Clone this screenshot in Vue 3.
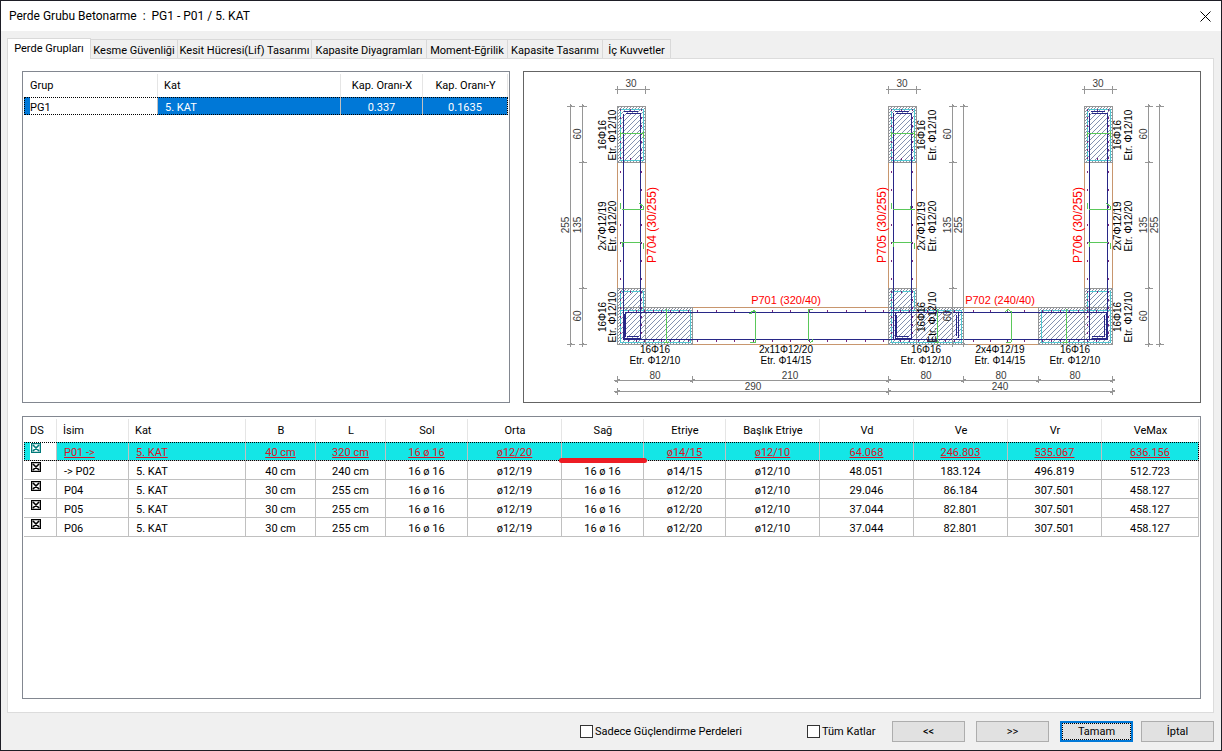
<template>
  <div class="window">
    <header class="titlebar">
      <h1 class="title">Perde Grubu Betonarme&nbsp; :&nbsp; PG1 - P01 / 5. KAT</h1>
      <button class="btn-close" aria-label="Kapat">
        <svg width="11" height="11" viewBox="0 0 11 11">
          <path d="M0.5 0.5L10.5 10.5M10.5 0.5L0.5 10.5" stroke="#000" fill="none" />
        </svg>
      </button>
    </header>

    <nav class="tabs" role="tablist">
      <button
        v-for="tab in tabs"
        :key="tab.label"
        class="tab"
        :class="{ active: tab.label === activeTab }"
        :style="{ width: tab.width + 'px' }"
        role="tab"
        :aria-selected="tab.label === activeTab"
        @click="activeTab = tab.label"
      >
        {{ tab.label }}
      </button>
    </nav>

    <main class="page">
      <div class="top">
        <section class="panel">
          <table class="grid groups">
            <colgroup>
              <col
                v-for="(w, i) in groupWidths"
                :key="i"
                :style="{ width: pct(w, groupWidths) }"
              >
            </colgroup>
            <thead>
              <tr>
                <th class="left">Grup</th>
                <th class="left">Kat</th>
                <th>Kap. Oranı-X</th>
                <th>Kap. Oranı-Y</th>
              </tr>
            </thead>
            <tbody>
              <tr class="selected">
                <td class="left editing">PG1</td>
                <td class="left">5. KAT</td>
                <td>0.337</td>
                <td>0.1635</td>
              </tr>
            </tbody>
          </table>
        </section>

        <!-- Wall group plan -->
        <section class="panel plan">
          <svg class="drawing" viewBox="524 72 676 330">
            <defs>
              <pattern id="hatch" width="5" height="5" patternUnits="userSpaceOnUse">
                <path d="M-1 6L6 -1M-1 1L1 -1M4 6L6 4" stroke="#8492b0" />
              </pattern>
              <pattern id="hatch-fine" width="3" height="3" patternUnits="userSpaceOnUse">
                <path d="M-1 4L4 -1" stroke="#8a93a2" />
              </pattern>
            </defs>

            <!-- Concrete outlines -->
            <g class="concrete">
              <path
                v-for="x in columns"
                :key="x"
                :d="`M${x} 162.5V288.5M${x + 28} 162.5V288.5`"
              />
              <path d="M645.5 307.5H888.5M916.5 307.5H1084.5M617.5 344.5H1112.5" />
            </g>

            <!-- Hatched end zones -->
            <g v-for="(z, i) in zones" :key="'z' + i">
              <rect :x="z.x" :y="z.y" :width="z.w" :height="z.h" fill="url(#hatch-fine)" />
              <rect :x="z.x + 3" :y="z.y + 3" :width="z.w - 6" :height="z.h - 6" fill="#fff" />
              <rect :x="z.x + 3" :y="z.y + 3" :width="z.w - 6" :height="z.h - 6" fill="url(#hatch)" />
              <rect class="stirrup" :x="z.x + 3" :y="z.y + 3" :width="z.w - 5" :height="z.h - 5" />
              <rect class="zone" :x="z.x" :y="z.y" :width="z.w" :height="z.h" />
            </g>
            <path class="dim" d="M617.5 307.5H645.5V344.5M888.5 307.5H916.5V344.5M1112.5 307.5H1084.5V344.5" />

            <!-- Rebar dots -->
            <g class="bars">
              <template v-for="x in columns" :key="'b' + x">
                <path
                  v-for="y in columnBars"
                  :key="y"
                  :d="`M${x + 3} ${y - 1}v2M${x + 24} ${y - 1}v2`"
                />
                <path :d="`M${x + 13} 109v2M${x + 13} 158v2M${x + 13} 291v2`" />
              </template>
              <path
                v-for="x in beamBars"
                :key="'h' + x"
                :d="`M${x + 0.5} 310v2M${x + 0.5} 340v2`"
              />
            </g>

            <!-- Mesh reinforcement -->
            <g class="mesh">
              <path d="M623.5 339V113.5M640.5 113.5V339M626 113.5H641M624 111.5H638" />
              <path d="M893.5 339V112.5M911.5 113V339.5M895 111.5H909M896 113.5H911" />
              <path d="M1089.5 339V112.5M1107.5 113V339.5M1091 111.5H1105M1092 113.5H1107" />
              <path d="M626 312.5H1107.5M623 339.5H1107.5M623.5 339V316L626 312.5" />
              <path d="M627 336.5H639M624.5 314V338.5H640M625.5 314V337" />
              <path d="M895.5 313V338.5H911M896.5 315V336.5H909M956.5 315V336M958.5 313V338" />
              <path d="M1104.5 315V336M1106.5 313V338.5H1092M1105 336.5H1092" />
            </g>

            <!-- Crossties -->
            <g class="ties">
              <path
                v-for="(x, i) in columns"
                :key="'t' + x"
                :d="columnTies(x, i)"
              />
              <path d="M666.5 309V342M664 342.5H669M937.5 309V342M935 342.5H939M1066.5 309V342M1062 342.5H1068" />
              <path d="M749 313.5H751L752 311.5H755.5V342M750 342.5H756M753 310.5H755" />
              <path d="M813 309.5H808.5V341M810 342.5L812 341.5V339" />
              <path d="M1005 312L1008 309.5L1011.5 312V342M1006 342.5H1011" />
            </g>

            <!-- Dimension lines -->
            <g class="dim">
              <template v-for="x in columns" :key="'d' + x">
                <path :d="`M${x - 3} 89.5H${x + 32}M${x} 86V94M${x + 28} 86V94`" />
              </template>
              <template v-for="d in sideDims" :key="'s' + d.x">
                <path :d="`M${d.x} 104V347`" />
                <path
                  v-for="y in d.ticks"
                  :key="y"
                  :d="`M${d.x - 4} ${y}H${d.x + 4}M${d.x - 1} ${y + 2}L${d.x + 1} ${y - 1}`"
                />
              </template>
              <path d="M614 380.5H1115M614 391.5H1115" />
              <path v-for="x in [617.5, 692.5, 888.5, 963.5, 1038.5, 1112.5]" :key="'m' + x" :d="`M${x} 376V383M${x - 2} 382L${x + 2} 379`" />
              <path v-for="x in [617.5, 888.5, 1112.5]" :key="'n' + x" :d="`M${x} 388V395M${x - 2} 393L${x + 2} 390`" />
            </g>

            <!-- Labels -->
            <text
              v-for="(t, i) in labels"
              :key="'l' + i"
              :class="t.kind"
              :x="t.x"
              :y="t.y"
            >{{ t.text }}</text>
            <text
              v-for="(t, i) in verticalLabels"
              :key="'v' + i"
              :class="t.kind"
              :transform="`translate(${t.x} ${t.y}) rotate(-90)`"
            >{{ t.text }}</text>
          </svg>
        </section>
      </div>

      <section class="panel bottom">
        <table class="grid walls">
          <colgroup>
            <col
              v-for="(c, i) in columnsDef"
              :key="i"
              :style="{ width: pct(c.width, columnsDef.map(d => d.width)) }"
            >
          </colgroup>
          <thead>
            <tr>
              <th v-for="(c, i) in columnsDef" :key="c.label" :class="{ left: i < 3 }">
                {{ c.label }}
              </th>
            </tr>
          </thead>
          <tbody>
            <tr v-for="(row, r) in walls" :key="row[0]" :class="{ current: r === 0 }">
              <td class="check-cell">
                <input class="check" type="checkbox" checked :aria-label="row[0]">
              </td>
              <td v-for="(cell, c) in row" :key="c" :class="{ left: c < 2 }">
                <div v-if="r === 0 && c === 6" class="marked">
                  <span class="marker" />
                </div>
                <span v-else class="value">{{ cell }}</span>
              </td>
            </tr>
          </tbody>
        </table>
      </section>
    </main>

    <footer class="footer">
      <label class="option only"><input v-model="onlyRetrofit" type="checkbox">Sadece Güçlendirme Perdeleri</label>
      <label class="option all"><input v-model="allFloors" type="checkbox">Tüm Katlar</label>
      <div class="buttons">
        <button class="btn">&lt;&lt;</button>
        <button class="btn">&gt;&gt;</button>
        <button class="btn primary">Tamam</button>
        <button class="btn last">İptal</button>
      </div>
    </footer>
  </div>
</template>

<script setup>
import { ref } from 'vue'

const tabs = [
  { label: 'Perde Grupları', width: 84 },
  { label: 'Kesme Güvenliği', width: 87 },
  { label: 'Kesit Hücresi(Lif) Tasarımı', width: 134 },
  { label: 'Kapasite Diyagramları', width: 115 },
  { label: 'Moment-Eğrilik', width: 81 },
  { label: 'Kapasite Tasarımı', width: 95 },
  { label: 'İç Kuvvetler', width: 68 },
]
const activeTab = ref('Perde Grupları')
const onlyRetrofit = ref(false)
const allFloors = ref(false)

const groupWidths = [134, 183, 82, 85]

const columnsDef = [
  { label: 'DS', width: 33 },
  { label: 'İsim', width: 72 },
  { label: 'Kat', width: 117 },
  { label: 'B', width: 70 },
  { label: 'L', width: 70 },
  { label: 'Sol', width: 82 },
  { label: 'Orta', width: 94 },
  { label: 'Sağ', width: 82 },
  { label: 'Etriye', width: 82 },
  { label: 'Başlık Etriye', width: 94 },
  { label: 'Vd', width: 94 },
  { label: 'Ve', width: 94 },
  { label: 'Vr', width: 94 },
  { label: 'VeMax', width: 97 },
]

const walls = [
  ['P01 ->', '5. KAT', '40 cm', '320 cm', '16 ø 16', 'ø12/20', '', 'ø14/15', 'ø12/10', '64.068', '246.803', '535.067', '636.156'],
  ['-> P02', '5. KAT', '40 cm', '240 cm', '16 ø 16', 'ø12/19', '16 ø 16', 'ø14/15', 'ø12/10', '48.051', '183.124', '496.819', '512.723'],
  ['P04', '5. KAT', '30 cm', '255 cm', '16 ø 16', 'ø12/19', '16 ø 16', 'ø12/20', 'ø12/10', '29.046', '86.184', '307.501', '458.127'],
  ['P05', '5. KAT', '30 cm', '255 cm', '16 ø 16', 'ø12/19', '16 ø 16', 'ø12/20', 'ø12/10', '37.044', '82.801', '307.501', '458.127'],
  ['P06', '5. KAT', '30 cm', '255 cm', '16 ø 16', 'ø12/19', '16 ø 16', 'ø12/20', 'ø12/10', '37.044', '82.801', '307.501', '458.127'],
]

function pct(width, all) {
  return (width / all.reduce((a, b) => a + b, 0)) * 100 + '%'
}

// left face of each vertical wall
const columns = [617.5, 888.5, 1084.5]

const zones = [
  ...columns.map(x => ({ x, y: 106.5, w: 28, h: 56 })),
  ...columns.map(x => ({ x, y: 288.5, w: 28, h: 56 })),
  { x: 617.5, y: 307.5, w: 75, h: 37 },
  { x: 888.5, y: 307.5, w: 75, h: 37 },
  { x: 1038.5, y: 307.5, w: 74, h: 37 },
]

const columnBars = [110, 118, 126, 134, 142, 150, 158, 172, 190, 207, 225, 243, 261, 279, 292, 300, 308, 317, 325, 333]

const beamBars = [
  628, 636, 644, 653, 661, 670, 679, 688, 697, 716, 734, 753, 772, 790, 809, 827, 846, 865, 883,
  900, 909, 918, 927, 936, 945, 954, 973, 990, 1007, 1024, 1042, 1051, 1060, 1069, 1078, 1087, 1096,
]

function columnTies(x, i) {
  const left = x + 3
  const right = x + 26
  const hook = i === 1 ? 'h-4v-4' : 'v-3l-4 -3'
  return `M${left} 133.5H${right}M${left} 137v-5M${right} 131v7` +
    `M${left + 1} 209.5H${right}${hook}M${left} 203v6` +
    `M${left} 242.5H${right - 3}M${left + 2} 242v5M${right} 243v6`
}

const allTicks = [106.5, 162.5, 288.5, 344.5]
const endTicks = [106.5, 344.5]
const sideDims = [
  { x: 570.5, ticks: endTicks },
  { x: 582.5, ticks: allTicks },
  { x: 952.5, ticks: allTicks },
  { x: 963.5, ticks: endTicks },
  { x: 1148.5, ticks: allTicks },
  { x: 1159.5, ticks: endTicks },
]

const labels = [
  ...[631, 902, 1098].map(x => ({ kind: 'size', x, y: 87, text: '30' })),
  ...[655, 926, 1001, 1075].map(x => ({ kind: 'size', x, y: 379, text: '80' })),
  { kind: 'size', x: 790, y: 379, text: '210' },
  { kind: 'size', x: 753, y: 390, text: '290' },
  { kind: 'size', x: 1000, y: 390, text: '240' },
  { kind: 'wall-name', x: 786, y: 304, text: 'P701 (320/40)' },
  { kind: 'wall-name', x: 1000, y: 304, text: 'P702 (240/40)' },
  ...[655, 926, 1075].flatMap(x => [
    { kind: 'note', x, y: 353, text: '16Φ16' },
    { kind: 'note', x, y: 364, text: 'Etr. Φ12/10' },
  ]),
  { kind: 'note', x: 786, y: 353, text: '2x11Φ12/20' },
  { kind: 'note', x: 786, y: 364, text: 'Etr. Φ14/15' },
  { kind: 'note', x: 1000, y: 353, text: '2x4Φ12/19' },
  { kind: 'note', x: 1000, y: 364, text: 'Etr. Φ14/15' },
]

// x positions are text baselines, read bottom to top
const verticalSets = [
  { name: 'P704 (30/255)', nameX: 656, bars: 606, ties: 616, inner: 581, outer: 569 },
  { name: 'P705 (30/255)', nameX: 886, bars: 925, ties: 936, inner: 951, outer: 962 },
  { name: 'P706 (30/255)', nameX: 1082, bars: 1121, ties: 1132, inner: 1147, outer: 1158 },
]

const verticalLabels = verticalSets.flatMap(s => [
  { kind: 'wall-name tall', x: s.nameX, y: 225, text: s.name },
  { kind: 'note', x: s.bars, y: 135, text: '16Φ16' },
  { kind: 'note', x: s.ties, y: 135, text: 'Etr. Φ12/10' },
  { kind: 'note', x: s.bars, y: 226, text: '2x7Φ12/19' },
  { kind: 'note', x: s.ties, y: 226, text: 'Etr. Φ12/20' },
  { kind: 'note', x: s.bars, y: 317, text: '16Φ16' },
  { kind: 'note', x: s.ties, y: 317, text: 'Etr. Φ12/10' },
  { kind: 'size', x: s.inner, y: 134, text: '60' },
  { kind: 'size', x: s.inner, y: 225, text: '135' },
  { kind: 'size', x: s.inner, y: 316, text: '60' },
  { kind: 'size', x: s.outer, y: 225, text: '255' },
])
</script>

<style>
body {
  margin: 0;
}
</style>

<style scoped>
.window {
  box-sizing: border-box;
  display: flex;
  flex-direction: column;
  min-height: 100vh;
  border: 1px solid #1e1e26;
  background: #f0f0f0;
  color: #000;
  font-family: Roboto, "Liberation Sans", sans-serif;
  font-size: 11px;
  line-height: 14px;
}

button {
  font: inherit;
  color: inherit;
}

.titlebar {
  display: flex;
  align-items: center;
  justify-content: space-between;
  height: 30px;
  padding: 0 10px 0 8px;
  background: #fff;
}

.title {
  margin: 0;
  font-size: 12px;
  font-weight: 400;
}

.btn-close {
  display: flex;
  padding: 0;
  border: none;
  background: none;
}

.tabs {
  display: flex;
  align-items: flex-end;
  height: 27px;
  padding-left: 6px;
}

.tab {
  box-sizing: border-box;
  height: 19px;
  padding: 3px 0 0;
  border: 1px solid #d9d9d9;
  border-width: 1px 1px 0 0;
  background: #f0f0f0;
  white-space: nowrap;
}

.tab.active {
  position: relative;
  height: 21px;
  margin-bottom: -1px;
  padding: 0 0 1px;
  border-left-width: 1px;
  background: #fff;
}

.page {
  flex: 1;
  display: flex;
  flex-direction: column;
  gap: 13px;
  margin: 0 7px 0 6px;
  padding: 12px 12px 13px 14px;
  border: 1px solid #dcdcdc;
  background: #fff;
}

.top {
  flex: 332 1 0;
  display: grid;
  grid-template-columns: 488fr 678fr;
  gap: 13px;
}

.panel {
  border: 1px solid #828790;
  background: #fff;
  min-width: 0;
}

.plan {
  border-color: #646464;
}

.bottom {
  flex: 283 1 0;
}

.drawing {
  display: block;
  width: 100%;
  height: 100%;
}

.grid {
  width: calc(100% - 2px);
  margin: 0 1px;
  border-collapse: separate;
  border-spacing: 0;
  table-layout: fixed;
}

.grid th {
  height: 25px;
  padding: 3px 0 0;
  box-sizing: border-box;
  background: linear-gradient(#e5e5e5, #e5e5e5) right bottom / 1px 23px no-repeat;
  font-weight: 400;
  text-align: center;
}

.grid td {
  box-sizing: border-box;
  height: 19px;
  padding: 3px 0 0;
  border-right: 1px solid #c0c0c0;
  border-bottom: 1px solid #c0c0c0;
  text-align: center;
  white-space: nowrap;
}

.grid th.left {
  padding-left: 6px;
  text-align: left;
}

.grid td.left {
  padding-left: 7px;
  text-align: left;
}

.groups td {
  height: 18px;
}

.selected td {
  border-bottom: none;
  background: #0078d7;
  color: #fff;
}

.grid .selected .editing {
  padding-left: 6px;
  background: linear-gradient(90deg, #0078d7 6px, #fff 6px);
  color: #000;
}

.selected,
.current {
  outline: 1px dotted #000;
  outline-offset: -1px;
}

.current td {
  background: #14e6e6;
  color: #dc1428;
}

.current .value {
  text-decoration: underline;
}

.grid .check-cell {
  padding: 1px 0 0 7px;
  text-align: left;
  vertical-align: top;
  line-height: 0;
}

.current .check-cell {
  background: linear-gradient(90deg, #14e6e6 6px, #fff 6px);
}

.check {
  appearance: none;
  width: 10px;
  height: 10px;
  margin: 0;
  background: url("data:image/svg+xml,%3Csvg xmlns='http://www.w3.org/2000/svg' viewBox='0 0 10 10'%3E%3Cpath d='M.5 .5h9v9h-9zM2 2l6 6M8 2l-6 6' fill='none' stroke='%23000' stroke-width='1.6'/%3E%3C/svg%3E");
}

.current .check {
  background: url("data:image/svg+xml,%3Csvg xmlns='http://www.w3.org/2000/svg' viewBox='0 0 10 10'%3E%3Cpath d='M.5 .5h9v9h-9zM2 2l6 6M8 2l-6 6' fill='none' stroke='%23007878' stroke-width='1.6'/%3E%3C/svg%3E");
}

.marked {
  position: relative;
  height: 15px;
}

/* hand-drawn highlight under the empty cell */
.marker {
  position: absolute;
  right: -4px;
  bottom: -3px;
  left: -3px;
  height: 5px;
  border-radius: 3px;
  background: #ed1c24;
}

.footer {
  display: flex;
  align-items: center;
  justify-content: flex-end;
  height: 37px;
  padding-right: 7px;
}

.option {
  display: flex;
  align-items: center;
  gap: 2px;
  white-space: nowrap;
}

.option input {
  appearance: none;
  box-sizing: border-box;
  width: 13px;
  height: 13px;
  margin: 0;
  border: 1px solid #333;
  background: #fff;
}

.only {
  width: 227px;
}

.all {
  width: 85px;
}

.buttons {
  display: flex;
  gap: 11px;
}

.btn {
  box-sizing: border-box;
  width: 73px;
  height: 21px;
  padding: 1px 0 0;
  border: 1px solid #adadad;
  background: #e1e1e1;
}

.btn.primary {
  border: 2px solid #0078d7;
  outline: 1px dotted #000;
  outline-offset: -3px;
}

.btn.last {
  margin-left: -3px;
}

.drawing path,
.drawing rect {
  shape-rendering: crispEdges;
}

.concrete path {
  stroke: #c8966e;
  fill: none;
}

.zone,
.dim {
  stroke: #969696;
  fill: none;
}

.stirrup {
  stroke: #50c8d2;
  fill: none;
}

.bars path {
  stroke: #78287d;
}

.mesh path {
  stroke: #282887;
  fill: none;
}

.ties path {
  stroke: #5ac85a;
  fill: none;
}

.drawing text {
  font-family: "Liberation Sans", Arial, sans-serif;
  font-size: 10px;
  text-anchor: middle;
}

.drawing .size {
  fill: #3c3c3c;
}

.drawing .wall-name {
  font-size: 11px;
  fill: #f00;
}

.drawing .tall {
  font-size: 12px;
}
</style>
